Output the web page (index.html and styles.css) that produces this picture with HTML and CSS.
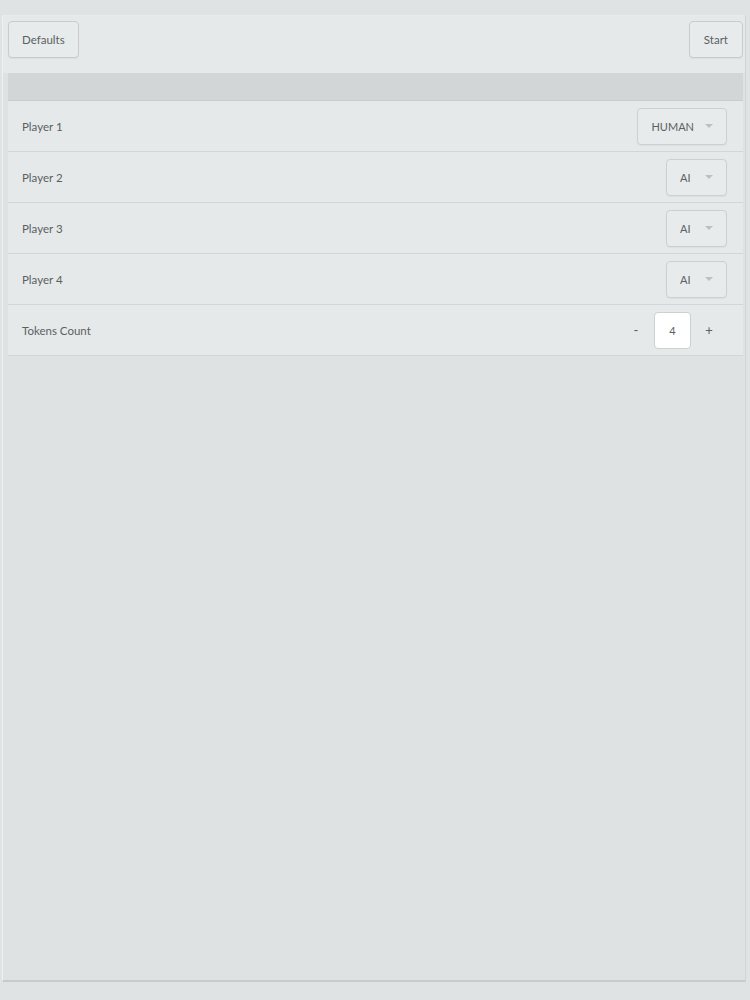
FILE: index.html
```html
<!DOCTYPE html>
<html>
<head>
<meta charset="utf-8">
<link rel="stylesheet" href="styles.css">
</head>
<body>
<div class="panel">
  <div class="toolbar">
    <button class="btn">Defaults</button>
    <button class="btn btn-start">Start</button>
  </div>
  <div class="list">
    <div class="list-header"></div>
    <div class="row">
      <span class="label">Player 1</span>
      <div class="select"><span>HUMAN</span><span class="caret"></span></div>
    </div>
    <div class="row">
      <span class="label">Player 2</span>
      <div class="select"><span>AI</span><span class="caret"></span></div>
    </div>
    <div class="row">
      <span class="label">Player 3</span>
      <div class="select"><span>AI</span><span class="caret"></span></div>
    </div>
    <div class="row">
      <span class="label">Player 4</span>
      <div class="select"><span>AI</span><span class="caret"></span></div>
    </div>
    <div class="row">
      <span class="label">Tokens Count</span>
      <div class="stepper">
        <span class="step">-</span>
        <div class="value">4</div>
        <span class="step">+</span>
      </div>
    </div>
  </div>
</div>
</body>
</html>
```
FILE: styles.css
```css
html, body {
  margin: 0;
  padding: 0;
  background: #e0e3e4;
  font-family: Lato, "Noto Sans", sans-serif;
  color: #585d60;
}
.panel {
  margin: 15px 4px 0 2px;
  height: 967px;
  background: #dfe2e3;
  border-left: 1px solid #eef0f1;
  border-top: 1px solid #e8ebec;
  border-right: 1px solid #d2d5d6;
  border-bottom: 2px solid #c8cbcc;
  box-sizing: border-box;
}
.toolbar {
  display: flex;
  justify-content: space-between;
  align-items: flex-start;
  padding: 5px 2px 0 5px;
  height: 57px;
  box-sizing: border-box;
  background: #e6e9ea;
}
.btn {
  height: 37px;
  padding: 0 13px;
  font-family: inherit;
  font-size: 11.5px;
  color: #5a5f62;
  background: #e8ebec;
  border: 1px solid #c9cccd;
  border-radius: 4px;
  box-shadow: 0 1px 1px rgba(0,0,0,0.05);
}
.btn-start {
  padding: 0 14px;
}
.list {
  margin: 0 2px 0 5px;
  background: #e6e9ea;
}
.list-header {
  height: 28px;
  background: #d3d6d7;
  border-bottom: 1px solid #c9cccd;
  box-sizing: border-box;
}
.row {
  display: flex;
  align-items: center;
  justify-content: space-between;
  height: 51px;
  padding: 0 16px 0 14px;
  border-bottom: 1px solid #d3d6d7;
  box-sizing: border-box;
  background: #e6e9ea;
}
.label {
  font-size: 11.5px;
  color: #5a5f62;
}
.select {
  display: flex;
  align-items: center;
  justify-content: space-between;
  min-width: 61px;
  height: 37px;
  box-sizing: border-box;
  padding: 0 13px 0 13px;
  border: 1px solid #cdd0d1;
  border-radius: 4px;
  background: #e8ebec;
  font-size: 11px;
  color: #5a5f62;
  gap: 11px;
  box-shadow: 0 1px 1px rgba(0,0,0,0.04);
}
.caret {
  width: 0;
  height: 0;
  border-left: 4px solid transparent;
  border-right: 4px solid transparent;
  border-top: 4px solid #bcc0c2;
}
.stepper {
  display: flex;
  align-items: center;
  margin-right: 8px;
}
.step {
  width: 20px;
  text-align: center;
  font-size: 13px;
  color: #5a5f62;
}
.stepper .step:first-child {
  margin-right: 8px;
}
.stepper .step:last-child {
  margin-left: 8px;
}
.value {
  width: 37px;
  height: 37px;
  box-sizing: border-box;
  background: #ffffff;
  border: 1px solid #cdd0d1;
  border-radius: 4px;
  display: flex;
  align-items: center;
  justify-content: center;
  font-size: 11px;
  color: #5a5f62;
}
```
